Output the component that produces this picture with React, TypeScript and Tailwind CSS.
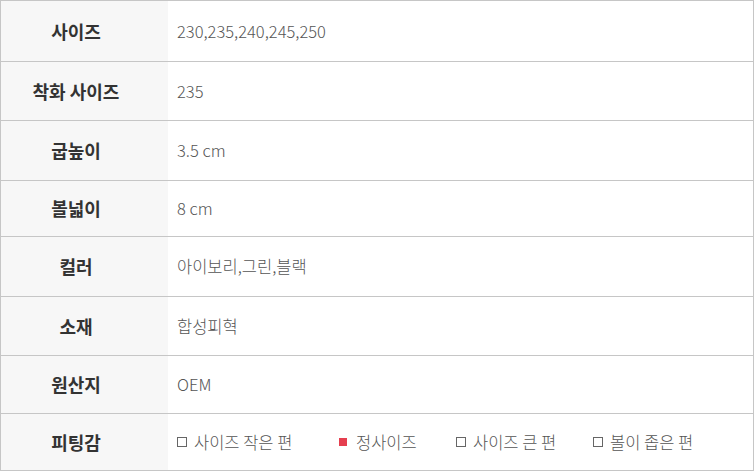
const rows = [
  { label: "사이즈", value: "230,235,240,245,250", h: "h-[61px]" },
  { label: "착화 사이즈", value: "235", h: "h-[59px]" },
  { label: "굽높이", value: "3.5 cm", h: "h-[60px]" },
  { label: "볼넓이", value: "8 cm", h: "h-[56px]" },
  { label: "컬러", value: "아이보리,그린,블랙", h: "h-[60px]" },
  { label: "소재", value: "합성피혁", h: "h-[59px]" },
  { label: "원산지", value: "OEM", h: "h-[58px]" },
];

const fits = [
  { text: "사이즈 작은 편", on: false, w: "w-[162px]" },
  { text: "정사이즈", on: true, w: "w-[117px]" },
  { text: "사이즈 큰 편", on: false, w: "w-[137px]" },
  { text: "볼이 좁은 편", on: false, w: "" },
];

const Row = ({ label, h, children }: { label: string; h: string; children: React.ReactNode }) => (
  <div className={`flex ${h} border-b border-[#c6c6c6]`}>
    <div className="w-[167px] shrink-0 bg-[#f7f7f7] flex items-center justify-center pr-[17px] text-[18px] font-bold text-[#333]">
      {label}
    </div>
    <div className="flex-1 flex items-center pl-[9px] text-[16.5px] font-light text-[#555]">{children}</div>
  </div>
);

export default function App() {
  return (
    <div
      className="w-[754px] h-[471px] bg-white border border-[#c6c6c6] border-b-0 overflow-hidden"
      style={{ fontFamily: '"Noto Sans CJK KR", "Noto Sans", sans-serif' }}
    >
      {rows.map((r) => (
        <Row key={r.label} label={r.label} h={r.h}>
          {r.value}
        </Row>
      ))}
      <Row label="피팅감" h="h-[57px]">
        {fits.map((f) => (
          <span key={f.text} className={`${f.w} flex items-center`}>
            {f.on ? (
              <span className="w-[8px] h-[8px] bg-[#e53f4f] mr-[9px]" />
            ) : (
              <span className="w-[10px] h-[10px] border border-[#666] mr-[7px]" />
            )}
            {f.text}
          </span>
        ))}
      </Row>
    </div>
  );
}
